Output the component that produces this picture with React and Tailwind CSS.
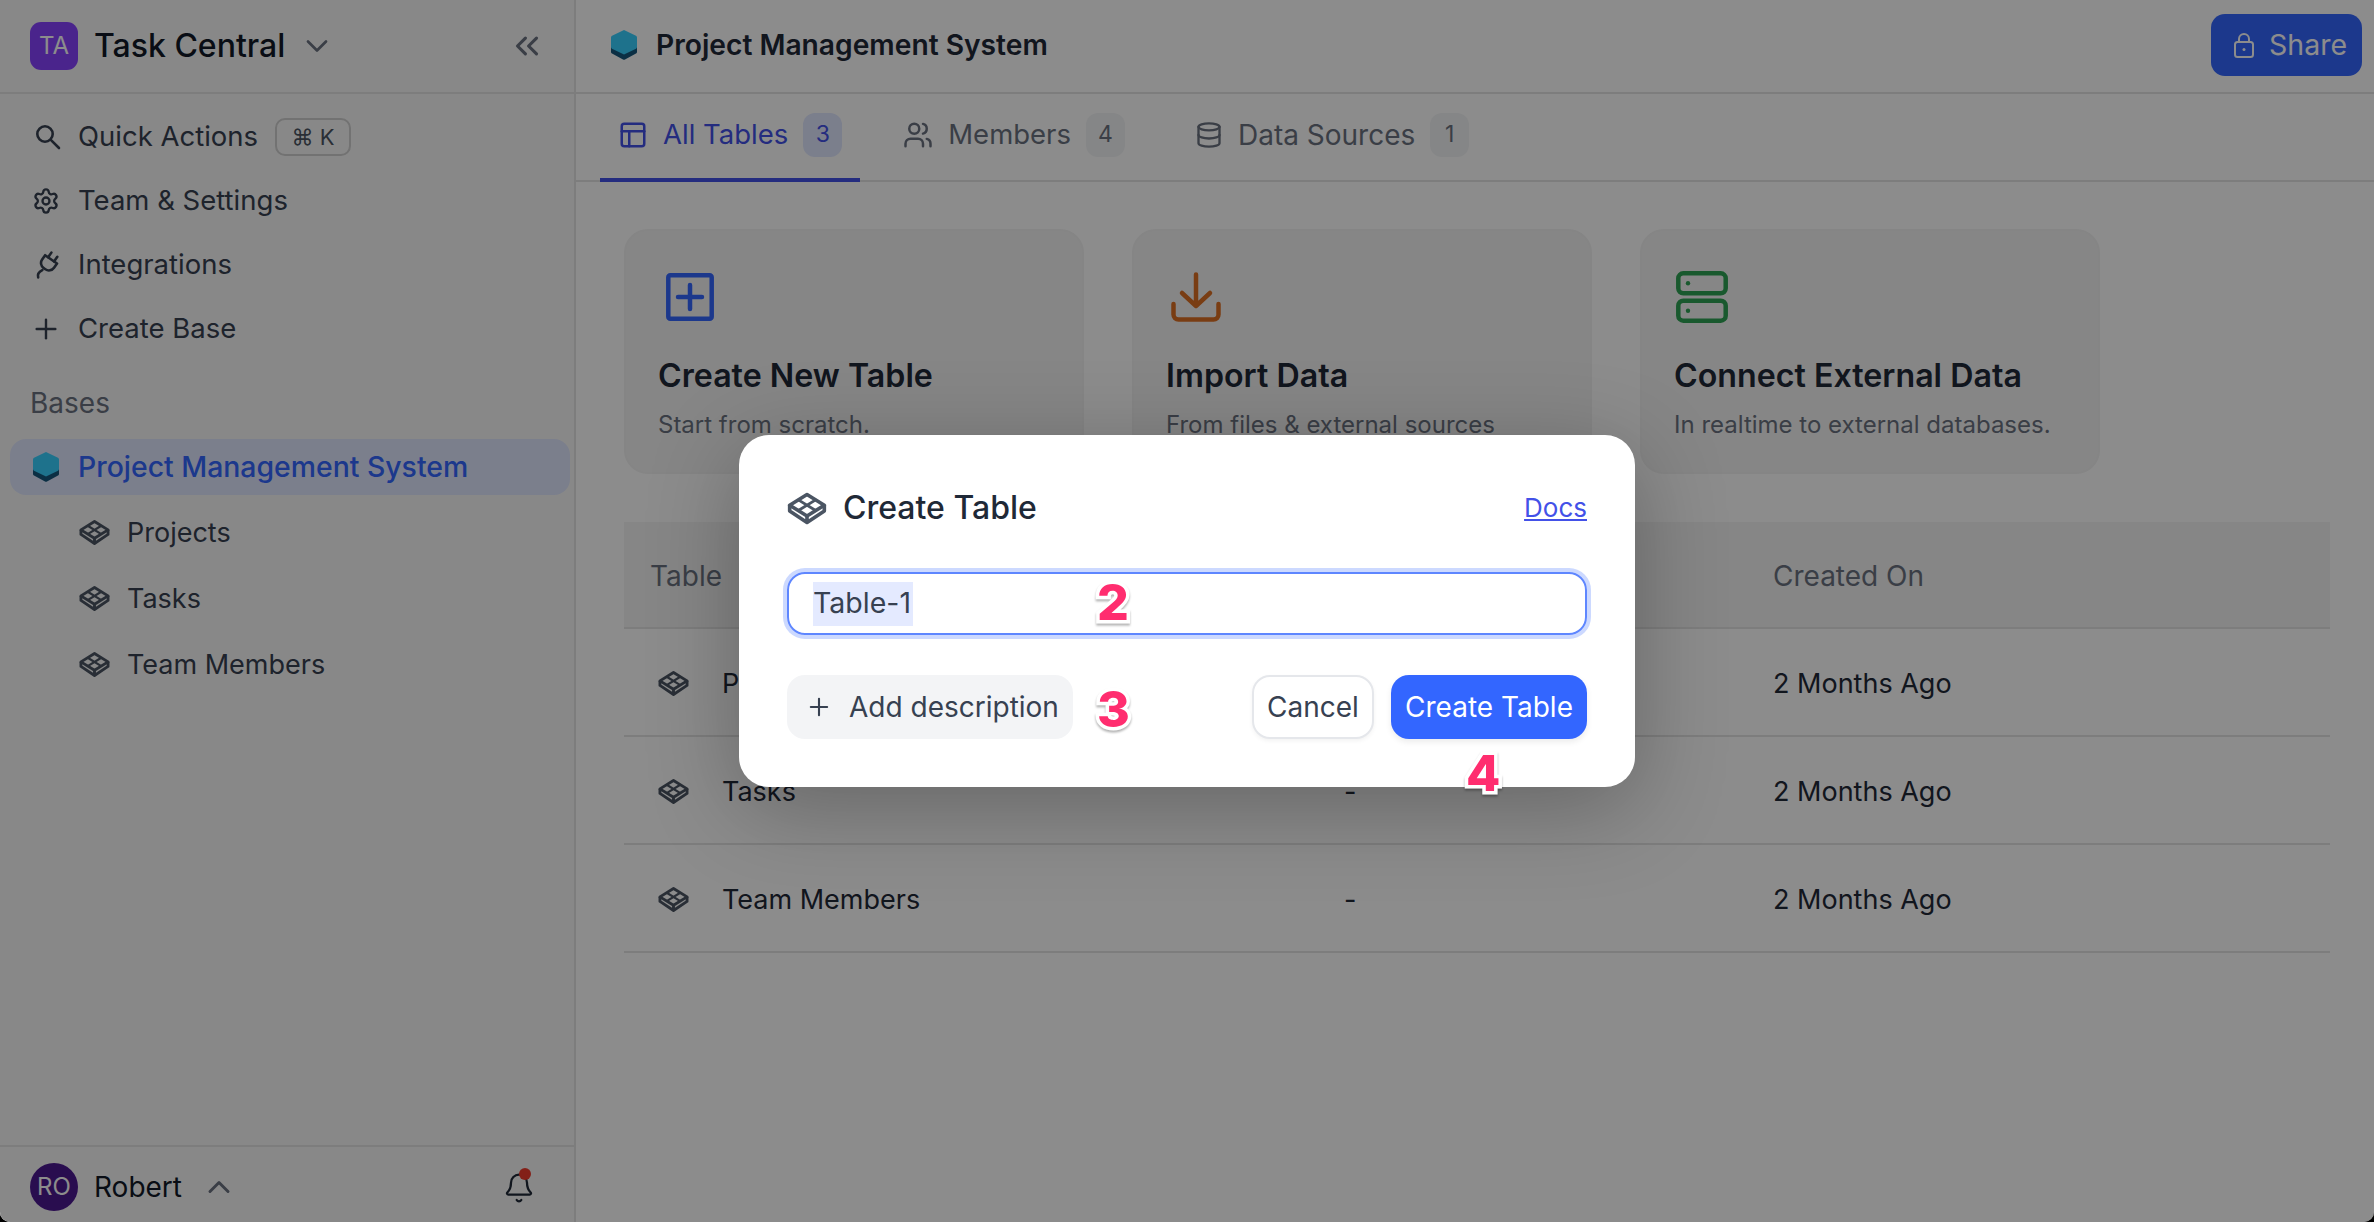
import React from "react";
import {
  Bell,
  ChevronDown,
  ChevronUp,
  ChevronsLeft,
  Database,
  PanelsTopLeft,
  Plus,
  Settings,
  Users,
} from "lucide-react";

// isometric grid box used for every table row
const TableIcon = ({ className }) => (
  <svg viewBox="0 0 24 20" fill="none" stroke="currentColor" strokeWidth="2.2" strokeLinejoin="round" className={className}>
    <path d="M12 1.500 22.500 8 12 14.500 1.500 8Z" />
    <path d="M6.750 4.750 17.250 11.250M17.250 4.750 6.750 11.250" strokeWidth="1.700" />
    <path d="M1.500 8v3.500L12 18.500l10.500-7V8M12 14.500v4" />
  </svg>
);

const BaseIcon = ({ className }) => (
  <svg viewBox="0 0 26 30" className={className}>
    <path d="M13 5 25 10a1 1 0 0 1 1 1v11a2 2 0 0 1-1 1.600L14 29.500a2 2 0 0 1-2 0L1 23.600A2 2 0 0 1 0 22V11a1 1 0 0 1 1-1Z" fill="#14577c" />
    <path d="M12 .4a2 2 0 0 1 2 0l11 5.400a2 2 0 0 1 1 1.700V17a2 2 0 0 1-1 1.700L14 24.100a2 2 0 0 1-2 0L1 18.700A2 2 0 0 1 0 17V7.500a2 2 0 0 1 1-1.700Z" fill="#38d0ff" />
  </svg>
);

const LockIcon = ({ className }) => (
  <svg viewBox="0 0 20 25" fill="none" stroke="currentColor" strokeWidth="2" className={className}>
    <rect x="1" y="9" width="18" height="15" rx="2.500" />
    <path d="M5 9V6a5 5 0 0 1 10 0v3" />
    <circle cx="10" cy="16.500" r="1.500" fill="currentColor" stroke="none" />
  </svg>
);

const SearchIcon = ({ className }) => (
  <svg viewBox="0 0 26 26" fill="none" stroke="currentColor" strokeWidth="2.600" strokeLinecap="round" className={className}>
    <circle cx="10" cy="10" r="7.700" />
    <path d="M15.800 15.800 24 24" />
  </svg>
);

const PlugIcon = ({ className }) => (
  <svg viewBox="0 0 24 28" fill="none" stroke="currentColor" strokeWidth="2.500" strokeLinecap="round" strokeLinejoin="round" className={className}>
    <g transform="rotate(35 12 13)">
      <path d="M8.500 7V1.500M15.500 7V1.500" />
      <path d="M5 7h14v5a6 6 0 0 1-6 6h-2a6 6 0 0 1-6-6Z" />
    </g>
    <path d="M7 18.500C4 20 2 22 3 25.500" />
  </svg>
);

const SquarePlusIcon = ({ className }) => (
  <svg viewBox="0 0 48 48" fill="none" stroke="currentColor" strokeWidth="4.500" strokeLinecap="round" className={className}>
    <rect x="2.300" y="2.300" width="43.400" height="43.400" rx="2" />
    <path d="M24 12v24M12 24h24" />
  </svg>
);

const DownloadIcon = ({ className }) => (
  <svg viewBox="0 0 50 50" fill="none" stroke="currentColor" strokeWidth="4.500" strokeLinecap="round" strokeLinejoin="round" className={className}>
    <path d="M25 2.500V34M11 21l14 13 14-13" />
    <path d="M2.500 32v10.500a5 5 0 0 0 5 5h35a5 5 0 0 0 5-5V32" />
  </svg>
);

const ServerIcon = ({ className }) => (
  <svg viewBox="0 0 52 52" fill="none" stroke="currentColor" strokeWidth="4.500" className={className}>
    <rect x="2.300" y="2.300" width="47.400" height="20" rx="5" />
    <rect x="2.300" y="29.700" width="47.400" height="20" rx="5" />
    <circle cx="12" cy="12.300" r="2.200" fill="currentColor" stroke="none" />
    <circle cx="12" cy="39.700" r="2.200" fill="currentColor" stroke="none" />
  </svg>
);

const NavItem = ({ icon, label, children }) => (
  <div className="h-[64px] flex items-center pl-[32px] text-[#374151]">
    <span className="w-[46px] flex items-center">{icon}</span>
    <span className="text-[27.500px] leading-none">{label}</span>
    {children}
  </div>
);

const SubItem = ({ label }) => (
  <div className="h-[66px] flex items-center pl-[79px] text-[#374151]">
    <TableIcon className="w-[31px] h-[27px] text-[#4b5563]" />
    <span className="ml-[17px] text-[27px] leading-none">{label}</span>
  </div>
);

const Sidebar = () => (
  <aside className="w-[576px] shrink-0 h-full flex flex-col bg-[#f8f8f8] border-r-2 border-[#e3e3e3]">
    <div className="h-[94px] shrink-0 flex items-center pl-[30px] pr-[28px] border-b-2 border-[#e3e3e3]">
      <div className="w-[48px] h-[48px] rounded-[11px] bg-[#8843ff] text-white flex items-center justify-center text-[24px]">
        TA
      </div>
      <span className="ml-[16px] text-[32px] font-medium text-[#111827] leading-none">Task Central</span>
      <ChevronDown className="ml-[14px] w-[36px] h-[36px] text-[#6b7280]" strokeWidth={1.800} />
      <ChevronsLeft className="ml-auto w-[38px] h-[38px] text-[#6b7280]" strokeWidth={2} />
    </div>
    <div className="pt-[11px]">
      <NavItem icon={<SearchIcon className="w-[26px] h-[26px] ml-[3px]" />} label="Quick Actions">
        <span className="ml-[17px] h-[38px] w-[76px] rounded-[10px] border-2 border-[#cfcfcf] flex items-center justify-center text-[22px] text-[#4b5563] leading-none">
          ⌘ K
        </span>
      </NavItem>
      <NavItem icon={<Settings className="w-[28px] h-[28px]" strokeWidth={2} />} label="Team & Settings" />
      <NavItem icon={<PlugIcon className="w-[25px] h-[29px] ml-[3px]" />} label="Integrations" />
      <NavItem icon={<Plus className="w-[32px] h-[32px] -ml-[2px]" strokeWidth={1.800} />} label="Create Base" />
    </div>
    <div className="mt-[26px] h-[32px] pl-[30px] flex items-center text-[28px] text-[#6b7280] leading-none">Bases</div>
    <div className="mt-[20px] ml-[10px] mr-[4px] h-[56px] rounded-[16px] bg-[#e0e7ff] flex items-center pl-[23px] text-[#3366ff]">
      <BaseIcon className="w-[26px] h-[30px]" />
      <span className="ml-[19px] text-[28.400px] font-medium leading-none">Project Management System</span>
    </div>
    <div className="pt-[4px]">
      <SubItem label="Projects" />
      <SubItem label="Tasks" />
      <SubItem label="Team Members" />
    </div>
    <div className="mt-auto h-[77px] shrink-0 flex items-center pt-[4px] pl-[30px] pr-[39px] border-t-2 border-[#e3e3e3]">
      <div className="w-[48px] h-[48px] rounded-full bg-[#4c1891] text-white flex items-center justify-center text-[24px]">
        RO
      </div>
      <span className="ml-[16px] text-[28px] text-[#111827] leading-none">Robert</span>
      <ChevronUp className="ml-[19px] w-[36px] h-[36px] text-[#6b7280]" strokeWidth={2} />
      <div className="relative ml-auto mt-[3px]">
        <Bell className="w-[32px] h-[32px] text-[#1f2937]" strokeWidth={1.700} />
        <span className="absolute -top-[4px] right-[4px] w-[12px] h-[12px] rounded-full bg-[#ef3b2d]" />
      </div>
    </div>
  </aside>
);

const Tab = ({ icon, label, count, active, className, textClass = "text-[27.500px]" }) => (
  <div className={`h-[88px] flex items-center px-[18px] pb-[3px] border-b-4 -mb-[2px] ${active ? "border-[#4351e8] text-[#4351e8]" : "border-transparent text-[#6b7280]"} ${className}`}>
    {icon}
    <span className={`ml-[15px] leading-none ${textClass}`}>{label}</span>
    <span className={`ml-[15px] w-[39px] h-[44px] rounded-[12px] flex items-center justify-center text-[23px] ${active ? "bg-[#e0e7ff]" : "bg-[#f3f4f6]"}`}>
      {count}
    </span>
  </div>
);

const ActionCard = ({ icon, title, text }) => (
  <div className="w-[460px] h-[245px] rounded-[24px] bg-[#f5f5f5] border-2 border-[#f2f2f2] pt-[38px] pl-[32px]">
    <div className="h-[56px] flex items-center">{icon}</div>
    <h3 className="mt-[35px] text-[32.200px] font-semibold text-[#1f2937] leading-none">{title}</h3>
    <p className="mt-[21px] text-[24px] text-[#6b7280] leading-none">{text}</p>
  </div>
);

const rows = ["Projects", "Tasks", "Team Members"];

const Main = () => (
  <main className="flex-1 min-w-0 h-full flex flex-col">
    <header className="h-[94px] shrink-0 flex items-center pl-[35px] pr-[12px] pb-[2px] border-b-2 border-[#e3e3e3]">
      <BaseIcon className="w-[26px] h-[30px]" />
      <span className="ml-[19px] text-[28.200px] font-semibold text-[#1f2937] leading-none">Project Management System</span>
      <button className="ml-auto w-[151px] h-[62px] rounded-[14px] bg-[#3366ff] text-white flex items-center pl-[23px]">
        <LockIcon className="w-[20px] h-[25px]" />
        <span className="ml-[15px] text-[28.500px] leading-none">Share</span>
      </button>
    </header>
    <nav className="h-[88px] shrink-0 flex pl-[24px] border-b-2 border-[#e3e3e3]">
      <Tab active label="All Tables" count="3" icon={<PanelsTopLeft className="w-[30px] h-[30px]" strokeWidth={2} />} />
      <Tab className="ml-[25px]" label="Members" count="4" icon={<Users className="w-[30px] h-[30px]" strokeWidth={2} />} />
      <Tab className="ml-[34px]" textClass="text-[28px]" label="Data Sources" count="1" icon={<Database className="w-[28px] h-[28px]" strokeWidth={2} />} />
    </nav>
    <div className="pt-[47px] pl-[48px] pr-[44px]">
      <div className="flex gap-[48px]">
        <ActionCard
          title="Create New Table"
          text="Start from scratch."
          icon={<SquarePlusIcon className="w-[48px] h-[48px] ml-[8px] text-[#3366ff]" />}
        />
        <ActionCard
          title="Import Data"
          text="From files & external sources"
          icon={<DownloadIcon className="w-[50px] h-[50px] ml-[5px] text-[#dd7024]" />}
        />
        <ActionCard
          title="Connect External Data"
          text="In realtime to external databases."
          icon={<ServerIcon className="w-[52px] h-[52px] ml-[2px] text-[#2fa354]" />}
        />
      </div>
      <div className="mt-[48px]">
        <div className="h-[107px] flex items-center pt-[2px] bg-[#f4f4f4] border-b-2 border-[#e3e3e3] text-[28px] text-[#6b7280] leading-none">
          <span className="w-[1149px] pl-[26px]">Table</span>
          <span>Created On</span>
        </div>
        {rows.map((name) => (
          <div key={name} className="h-[108px] flex items-center pt-[2px] border-b-2 border-[#e3e3e3] text-[27px] text-[#1f2937] leading-none">
            <div className="w-[720px] pl-[34px] flex items-center">
              <TableIcon className="w-[31px] h-[27px] text-[#4b5563]" />
              <span className="ml-[33px]">{name}</span>
            </div>
            <span className="w-[429px]">-</span>
            <span className="text-[27px]">2 Months Ago</span>
          </div>
        ))}
      </div>
    </div>
  </main>
);

const Marker = ({ className, children }) => (
  <span className={`absolute text-[50px] font-extrabold leading-none text-[#ff2d6f] [-webkit-text-stroke:7px_white] [paint-order:stroke_fill] drop-shadow-[0_2px_1px_rgba(0,0,0,0.3)] ${className}`}>
    {children}
  </span>
);

const CreateTableModal = () => (
  <div className="relative w-[896px] h-[352px] rounded-[30px] bg-white shadow-[0_20px_90px_rgba(0,0,0,0.28)] px-[48px] pt-[48px]">
    <div className="flex items-center h-[50px]">
      <TableIcon className="w-[40px] h-[33px] text-[#4b5563]" />
      <span className="ml-[16px] text-[32px] font-medium text-[#1f2937] leading-none">Create Table</span>
      <a className="ml-auto text-[26px] text-[#4351e8] underline leading-none">Docs</a>
    </div>
    <div className="mt-[39px] h-[63px] rounded-[18px] border-2 border-[#5e86ff] shadow-[0_0_0_4px_#ccd9ff] flex items-center pl-[24px]">
      <span className="h-[44px] flex items-center pr-[2px] bg-[#e4eaff] text-[28.500px] text-[#374151] leading-none">Table-1</span>
    </div>
    <div className="mt-[40px] flex items-center">
      <button className="w-[286px] h-[64px] rounded-[18px] bg-[#f3f4f6] flex items-center pl-[20px] text-[#374151]">
        <Plus className="w-[28px] h-[28px] -ml-[2px]" strokeWidth={1.800} />
        <span className="ml-[16px] text-[28px] leading-none">Add description</span>
      </button>
      <button className="ml-auto w-[122px] h-[64px] rounded-[18px] bg-white border-2 border-[#e5e7eb] shadow-[0_2px_4px_rgba(0,0,0,0.05)] text-[28px] text-[#374151] leading-none">
        Cancel
      </button>
      <button className="ml-[17px] w-[196px] h-[64px] rounded-[18px] bg-[#3366ff] shadow-[0_3px_6px_rgba(0,0,0,0.08)] text-[28px] text-white leading-none">
        Create Table
      </button>
    </div>
    <Marker className="left-[358px] top-[142px]">2</Marker>
    <Marker className="left-[358px] top-[249px]">3</Marker>
    <Marker className="left-[727px] top-[313px]">4</Marker>
  </div>
);

export default function App() {
  return (
    <div className="w-[2374px] h-[1222px] bg-black">
      <div className="relative w-full h-full overflow-hidden rounded-b-[10px] bg-white flex font-['Inter',sans-serif]">
        <Sidebar />
        <Main />
        {/* dimmed backdrop with the dialog centred on it */}
        <div className="absolute inset-0 bg-black/45 flex items-center justify-center">
          <CreateTableModal />
        </div>
      </div>
    </div>
  );
}
